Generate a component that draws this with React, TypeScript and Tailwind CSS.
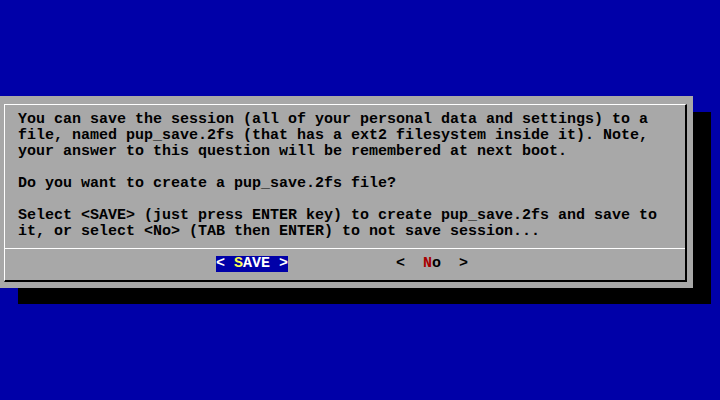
import React from 'react';

const lines = [
    'You can save the session (all of your personal data and settings) to a',
    'file, named pup_save.2fs (that has a ext2 filesystem inside it). Note,',
    'your answer to this question will be remembered at next boot.',
    '',
    'Do you want to create a pup_save.2fs file?',
    '',
    'Select <SAVE> (just press ENTER key) to create pup_save.2fs and save to',
    'it, or select <No> (TAB then ENTER) to not save session...',
];

export default function App() {
    return (
        <div
            className="w-[720px] h-[400px] bg-[#0000a8] overflow-hidden text-[15px] leading-[16px] font-bold text-black"
            style={{ fontFamily: '"Liberation Mono", "DejaVu Sans Mono", monospace' }}
        >
            {/* Dialog */}
            <div className="mt-[96px] w-[693px] h-[192px] bg-[#a8a8a8] shadow-[18px_16px_0_0_#000] pt-[8px] pl-[4px] pr-[6px] pb-[6px]">
                <div className="h-full border-t border-l border-t-white border-l-white border-r-2 border-b-2 border-r-black border-b-black flex flex-col">
                    {/* Message */}
                    <div className="pt-[7px] pl-[13px]">
                        {lines.map((line, idx) => (
                            <div key={idx} className="h-[16px] whitespace-pre">
                                {line}
                            </div>
                        ))}
                    </div>

                    {/* Separator */}
                    <div className="mt-[8px] h-px bg-white"></div>

                    {/* Buttons */}
                    <div className="mt-[7px] h-[16px] flex pl-[211px] gap-[108px] whitespace-pre">
                        <span className="bg-[#0000a8] text-white">
                            {'< '}
                            <span className="text-[#fcfc54]">S</span>
                            {'AVE >'}
                        </span>
                        <span>
                            {'<  '}
                            <span className="text-[#a80000]">N</span>
                            {'o  >'}
                        </span>
                    </div>
                </div>
            </div>
        </div>
    );
}
